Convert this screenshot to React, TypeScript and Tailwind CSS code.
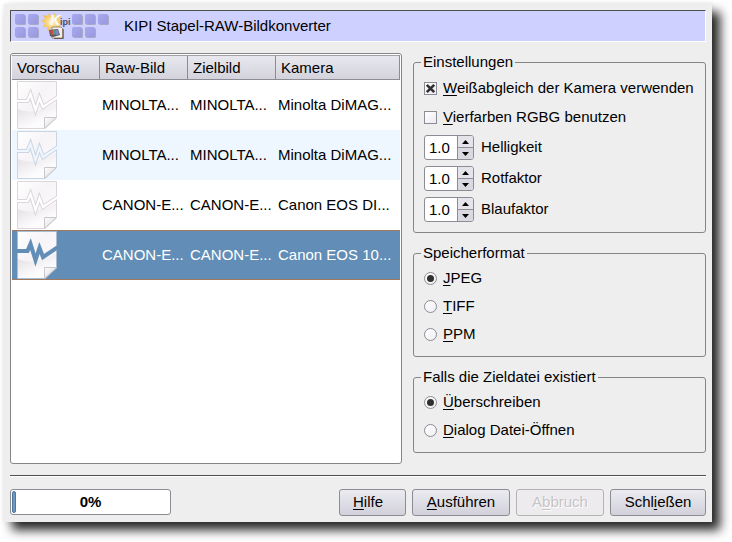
import { useState, type ReactNode } from 'react';

type Row = { raw: string; target: string; camera: string };

const rows: Row[] = [
  { raw: 'MINOLTA...', target: 'MINOLTA...', camera: 'Minolta DiMAG...' },
  { raw: 'MINOLTA...', target: 'MINOLTA...', camera: 'Minolta DiMAG...' },
  { raw: 'CANON-E...', target: 'CANON-E...', camera: 'Canon EOS DI...' },
  { raw: 'CANON-E...', target: 'CANON-E...', camera: 'Canon EOS 10...' },
];

const squares = [
  [3, 2], [16, 2], [3, 15], [16, 15],
  [60, 2], [73, 2], [86, 2], [60, 15], [73, 15],
];

function KipiLogo() {
  return (
    <svg width="100" height="28" viewBox="0 0 100 28" aria-hidden="true">
      <defs>
        <linearGradient id="tile" x1="0" y1="0" x2="1" y2="1">
          <stop offset="0" stopColor="#a9a9ee" />
          <stop offset="1" stopColor="#9898e0" />
        </linearGradient>
        <radialGradient id="sun">
          <stop offset="0" stopColor="#fff7c8" />
          <stop offset="1" stopColor="#f3b83c" />
        </radialGradient>
      </defs>
      {squares.map(([x, y]) => (
        <g key={`${x}-${y}`}>
          <rect x={x + 1} y={y + 1} width="10" height="10" rx="1.5" fill="#a9a9c4" />
          <rect x={x} y={y} width="10" height="10" rx="1.5" fill="url(#tile)" />
        </g>
      ))}
      <path
        d="M37 1l2 3 4-3 1 4 5-1-2 4 4 2-4 2 2 4-5-1-1 4-4-3-3 3-1-4-4 0 2-4-4-2 4-2-2-4 5 1z"
        fill="url(#sun)"
      />
      <text fontWeight="bold" fontFamily="Liberation Sans, sans-serif">
        <tspan x="38" y="13" fontSize="14" fontStyle="italic" fill="#ffffff" stroke="#f4efe6" strokeWidth="0.6">K</tspan>
        <tspan x="48" y="13" fontSize="9" fill="#4d4a66">ipi</tspan>
      </text>
      <path d="M40 15h9l2 2v9H40z" fill="#f4eee6" stroke="#8a7a6a" strokeWidth="0.8" />
      <path d="M51 17v9.500h-9" fill="none" stroke="#6a5848" strokeWidth="1.2" />
      <path d="M37 18l9-1 2 6-7 2-3-1z" fill="#4f5560" />
      <path d="M38 18.500l3-.5v5l-2 .5z" fill="#cf4a3c" />
      <path d="M41 18l3-.5v5l-3 .5z" fill="#4d9a86" />
      <path d="M44 18l2-.5 1 5-3 .5z" fill="#7d88c0" />
    </svg>
  );
}

function BrokenPage({ selected, striped }: { selected: boolean; striped: boolean }) {
  const band = selected ? '#628db6' : striped ? '#eef6ff' : '#ffffff';
  const edge = selected ? '#a9bdd3' : striped ? '#cbd5e2' : '#dcd5db';
  const crack = 'M-1 20H10.500L13.500 13L18.500 29L22.500 17L26 26L41 16';
  return (
    <svg className="block" width="40" height="48" viewBox="0 0 40 48" aria-hidden="true">
      <defs>
        <linearGradient id="paper" x1="0" y1="0" x2="1" y2="1">
          <stop offset="0" stopColor="#ffffff" />
          <stop offset="0.4" stopColor="#f7f4f7" />
          <stop offset="1" stopColor="#fdfcfd" />
        </linearGradient>
        <linearGradient id="lower" x1="0" y1="0" x2="0.7" y2="1">
          <stop offset="0" stopColor="#e0dbe2" />
          <stop offset="0.8" stopColor="#fdfcfd" />
        </linearGradient>
        <linearGradient id="fold" x1="0" y1="0" x2="1" y2="1">
          <stop offset="0" stopColor="#ffffff" />
          <stop offset="0.5" stopColor="#e9e8eb" />
        </linearGradient>
      </defs>
      <path d="M0.500 0.500H39.500V37L28 47.500H0.500Z" fill="url(#paper)" stroke={edge} />
      <path d="M1 28C10 32 22 32 39 22V36H28V47H1Z" fill="url(#lower)" />
      <path d="M27.500 47.500V36.500H39.500Z" fill="url(#fold)" stroke="#c9c7cc" />
      <path d={crack} fill="none" stroke={edge} strokeWidth="4.2" strokeMiterlimit="8" />
      <path d={crack} fill="none" stroke={band} strokeWidth={selected ? 3.8 : 2.2} strokeMiterlimit="8" />
    </svg>
  );
}

/* Label text with its keyboard accelerator underlined */
function Accel({ text, at = 0 }: { text: string; at?: number }) {
  return (
    <span>
      {text.slice(0, at)}
      <span className="underline decoration-1 underline-offset-2">{text[at]}</span>
      {text.slice(at + 1)}
    </span>
  );
}

function Group({ title, children }: { title: string; children: ReactNode }) {
  return (
    <fieldset className="min-w-0 rounded-[3px] border border-[#858585] px-[7px] pb-[10px]">
      <legend className="h-5 px-[2px] leading-5">{title}</legend>
      <div className="px-[3px] pt-[5px]">{children}</div>
    </fieldset>
  );
}

function Check({ text, initial }: { text: string; initial: boolean }) {
  const [on, setOn] = useState(initial);
  return (
    <label className="flex h-[21px] items-start gap-[6px] whitespace-nowrap">
      <span className="mt-1 grid shrink-0">
        <input
          type="checkbox"
          checked={on}
          onChange={() => setOn(!on)}
          className="col-start-1 row-start-1 size-[13px] appearance-none border border-[#8c8c94] bg-linear-to-br from-white to-[#ece9f0]"
        />
        {on && (
          <svg className="pointer-events-none col-start-1 row-start-1" width="13" height="13" viewBox="0 0 13 13" aria-hidden="true">
            <path d="M2.800 2.800L10.200 10.200M10.200 2.800L2.800 10.200" stroke="#303030" strokeWidth="2.600" />
          </svg>
        )}
      </span>
      <Accel text={text} />
    </label>
  );
}

function RadioList({ name, options }: { name: string; options: string[] }) {
  const [value, setValue] = useState(options[0]);
  return (
    <div className="flex flex-col gap-[7px] pb-px">
      {options.map((option) => (
        <label key={option} className="flex h-[21px] items-start gap-[6px] whitespace-nowrap">
          <span className="mt-1 grid shrink-0 place-items-center">
            <input
              type="radio"
              name={name}
              checked={value === option}
              onChange={() => setValue(option)}
              className="col-start-1 row-start-1 size-[13px] appearance-none rounded-full border border-[#8c8c94] bg-linear-to-br from-white to-[#f0eef3]"
            />
            {value === option && (
              <span className="pointer-events-none col-start-1 row-start-1 size-[7px] rounded-full bg-[#303030]" />
            )}
          </span>
          <Accel text={option} />
        </label>
      ))}
    </div>
  );
}

function Factor({ id, label }: { id: string; label: string }) {
  const [value, setValue] = useState(1);
  const step = (d: number) => setValue(Math.max(0, Math.round((value + d) * 10) / 10));
  return (
    <div className="flex gap-[7px]">
      <div className="flex h-[25px] w-[50px] overflow-hidden rounded-[3px] border border-[#8c8c94] bg-white">
        <input
          id={id}
          value={value.toFixed(1)}
          onChange={(e) => setValue(Number(e.target.value) || 0)}
          className="w-8 min-w-0 pl-1 outline-none"
        />
        <div className="flex flex-1 flex-col border-l border-[#8c8c94]">
          <button type="button" aria-label={`${label} erhöhen`} onClick={() => step(0.1)} className="flex flex-1 items-center justify-center border-b border-[#8c8c94] bg-[#e5e4eb]">
            <svg width="7" height="4" viewBox="0 0 7 4"><path d="M0 4L3.500 0L7 4Z" /></svg>
          </button>
          <button type="button" aria-label={`${label} verringern`} onClick={() => step(-0.1)} className="flex flex-1 items-center justify-center bg-[#dad9e1]">
            <svg width="7" height="4" viewBox="0 0 7 4"><path d="M0 0L3.500 4L7 0Z" /></svg>
          </button>
        </div>
      </div>
      <label htmlFor={id} className="leading-6">{label}</label>
    </div>
  );
}

const buttonLook =
  'flex h-[27px] items-start justify-center rounded-[3px] border border-[#8c8c94] bg-linear-to-b from-[#ebebf1] to-[#d2d1db] leading-6';

export default function App() {
  const [selected, setSelected] = useState(3);
  return (
    <div className="flex min-h-screen bg-white pt-1 pr-5 pb-5 pl-1 font-['Liberation_Sans',Arial,sans-serif] text-[15px] leading-5 text-black">
      <main className="flex flex-1 flex-col bg-[#eeeeee] p-[6px] shadow-[8px_8px_10px_rgba(0,0,0,0.85),0_0_5px_rgba(0,0,0,0.08)]">
        <header className="flex h-8 items-center gap-3 border border-t-[#505050] border-r-white border-b-white border-l-[#505050] bg-[#ced1ff] pl-px">
          <KipiLogo />
          <h1>KIPI Stapel-RAW-Bildkonverter</h1>
        </header>

        <div className="mt-[10px] flex flex-1 gap-[11px]">
          <div className="mt-px min-w-0 flex-1 rounded-[3px] border border-[#858585] bg-white p-px">
            <table className="w-full table-fixed border-separate border-spacing-0 text-left">
              <colgroup>
                <col className="w-[88px]" />
                <col className="w-[88px]" />
                <col className="w-[88px]" />
                <col />
              </colgroup>
              <thead>
                <tr className="h-[25px] bg-linear-to-b from-[#e9e9ef] to-[#d3d2dc]">
                  {['Vorschau', 'Raw-Bild', 'Zielbild', 'Kamera'].map((title) => (
                    <th key={title} className="border-y border-r border-[#8c8c94] border-t-[#a0a0a6] p-0 pl-[5px] font-normal">{title}</th>
                  ))}
                </tr>
              </thead>
              <tbody>
                {rows.map((row, i) => {
                  const active = i === selected;
                  const edge = active ? 'border-y border-[#a0795c]' : 'border-y border-transparent';
                  return (
                    <tr
                      key={i}
                      onClick={() => setSelected(i)}
                      className={active ? 'h-[50px] bg-[#628db6] text-white' : i % 2 ? 'h-[50px] bg-[#eef6ff]' : 'h-[50px]'}
                    >
                      <td className={`p-0 pl-[5px] ${edge}`}><BrokenPage selected={active} striped={i % 2 === 1} /></td>
                      <td className={`truncate p-0 pl-[2px] ${edge}`}>{row.raw}</td>
                      <td className={`truncate p-0 pl-[2px] ${edge}`}>{row.target}</td>
                      <td className={`truncate p-0 pl-[2px] ${edge}`}>{row.camera}</td>
                    </tr>
                  );
                })}
              </tbody>
            </table>
          </div>

          <div className="flex w-[293px] flex-col gap-[10px]">
            <Group title="Einstellungen">
              <div className="flex flex-col gap-[7px] pt-px">
                <div className="flex flex-col gap-[8px]">
                  <Check text="Weißabgleich der Kamera verwenden" initial={true} />
                  <Check text="Vierfarben RGBG benutzen" initial={false} />
                </div>
                <div className="flex flex-col gap-[6px]">
                  <Factor id="brightness" label="Helligkeit" />
                  <Factor id="red" label="Rotfaktor" />
                  <Factor id="blue" label="Blaufaktor" />
                </div>
              </div>
            </Group>
            <Group title="Speicherformat">
              <RadioList name="format" options={['JPEG', 'TIFF', 'PPM']} />
            </Group>
            <Group title="Falls die Zieldatei existiert">
              <RadioList name="existing" options={['Überschreiben', 'Dialog Datei-Öffnen']} />
            </Group>
          </div>
        </div>

        <hr className="mt-[11px] h-[2px] border-t border-b border-t-[#505050] border-b-white" />

        <footer className="mt-3 flex gap-[6px]">
          <div
            role="progressbar"
            aria-label="Fortschritt"
            aria-valuenow={0}
            className="grid h-[26px] w-[161px] items-center rounded-[3px] border border-[#8c8c94] bg-white p-px"
          >
            <span className="col-start-1 row-start-1 h-[22px] w-1 rounded-[2px] border border-[#4f769c] bg-[#6f98c0]" />
            <span className="col-start-1 row-start-1 text-center font-bold">0%</span>
          </div>
          <button type="button" className={`${buttonLook} ml-auto w-[67px] pr-[9px]`}><Accel text="Hilfe" /></button>
          <button type="button" className={`${buttonLook} w-[98px]`}><Accel text="Ausführen" /></button>
          <button type="button" disabled className="flex h-[27px] w-[88px] items-start justify-center rounded-[3px] border border-[#b4b4b4] bg-[#eeebee] leading-6 text-[#c6c4c6] [text-shadow:1px_1px_#ffffff]">
            <Accel text="Abbruch" at={1} />
          </button>
          <button type="button" className={`${buttonLook} w-24`}><Accel text="Schließen" at={4} /></button>
        </footer>
      </main>
    </div>
  );
}
